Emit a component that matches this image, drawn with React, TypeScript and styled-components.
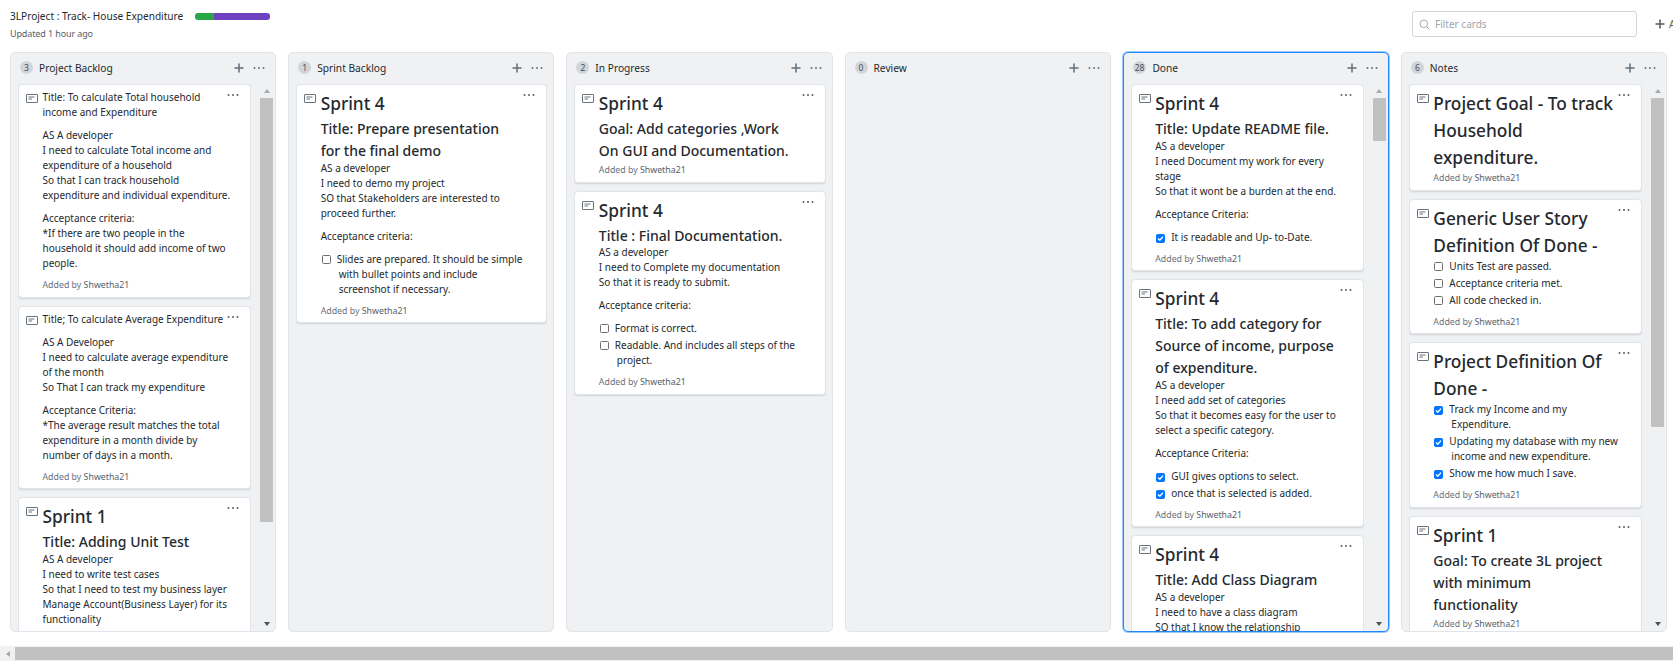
import React from "react";
import styled, { createGlobalStyle } from "styled-components";

const GlobalStyle = createGlobalStyle`
  html, body {
    margin: 0;
    padding: 0;
    background: #fff;
    overflow: hidden;
  }
  body {
    font-family: "Noto Sans", "Liberation Sans", sans-serif;
    color: #24292e;
  }
`;

const Page = styled.div`
  width: 1673px;
  height: 661px;
  display: flex;
  flex-direction: column;
  overflow: hidden;
`;

const Header = styled.header`
  height: 52px;
  flex-shrink: 0;
  display: flex;
  align-items: flex-start;
`;

const TitleBlock = styled.div`
  flex: 0 0 1412px;
  padding: 9px 0 0 10px;
  box-sizing: border-box;
`;

const TitleRow = styled.div`
  display: flex;
  align-items: center;
  height: 14px;
  gap: 12px;
`;

const ProjectName = styled.span`
  font-size: 10.1px;
  line-height: 14px;
  white-space: nowrap;
`;

const Progress = styled.div`
  width: 75px;
  height: 7px;
  border-radius: 3px;
  overflow: hidden;
  display: flex;
`;

const ProgressPart = styled.span<{ $color: string; $width: number }>`
  background: ${(p) => p.$color};
  width: ${(p) => p.$width}px;
`;

const Updated = styled.div`
  margin-top: 5px;
  font-size: 9px;
  letter-spacing: -0.12px;
  line-height: 12px;
  color: #586069;
`;

const FilterBox = styled.div`
  flex: 0 0 225px;
  height: 26px;
  margin-top: 11px;
  box-sizing: border-box;
  border: 1px solid #d1d5da;
  border-radius: 3px;
  display: flex;
  align-items: center;
  gap: 5px;
  padding-left: 6px;
  font-size: 10px;
  color: #9ea4aa;
`;

const AddCards = styled.div`
  flex-shrink: 0;
  margin: 11px 0 0 18px;
  height: 26px;
  display: flex;
  align-items: center;
  gap: 4px;
  font-size: 10.6px;
  color: #586069;
  white-space: nowrap;
`;

const Board = styled.main`
  height: 580px;
  flex-shrink: 0;
  padding: 0 6px 0 10px;
  display: flex;
  gap: 12px;
`;

const Column = styled.section<{ $active?: boolean }>`
  flex: 1 1 0;
  min-width: 0;
  box-sizing: border-box;
  display: flex;
  flex-direction: column;
  background: #f0f1f3;
  border: 1px solid ${(p) => (p.$active ? "#2188ff" : "#e1e4e8")};
  border-radius: 5px;
  box-shadow: ${(p) => (p.$active ? "0 0 0 1px rgba(33,136,255,0.45)" : "none")};
  overflow: hidden;
`;

const ColumnHead = styled.div`
  flex-shrink: 0;
  height: 31px;
  display: flex;
  align-items: center;
  padding: 0 10px 2px 9px;
  box-sizing: border-box;
`;

const Count = styled.span`
  min-width: 13px;
  height: 13px;
  padding: 0 2px;
  box-sizing: border-box;
  border-radius: 7px;
  background: #d1d5da;
  display: inline-flex;
  align-items: center;
  justify-content: center;
  font-size: 8.5px;
  color: #444d56;
`;

const ColumnName = styled.span`
  margin-left: 6px;
  font-size: 10.2px;
  flex: 1;
  white-space: nowrap;
`;

const HeadAction = styled.span`
  display: inline-flex;
  color: #6a737d;
  margin-left: 9px;
`;

const ColumnBody = styled.div`
  flex: 1;
  min-height: 0;
  display: flex;
  padding-left: 7px;
`;

const CardList = styled.div<{ $scroll?: boolean }>`
  flex: 1;
  min-width: 0;
  display: flex;
  flex-direction: column;
  gap: 8px;
  overflow: hidden;
  margin-right: ${(p) => (p.$scroll ? 0 : 6)}px;
`;

const Track = styled.div`
  flex: 0 0 13px;
  margin: 0 2px 0 9px;
  display: flex;
  flex-direction: column;
  align-items: center;
`;

const ArrowSlot = styled.div`
  flex: 0 0 14px;
  display: flex;
  align-items: center;
  justify-content: center;
  &:last-child {
    margin-top: auto;
  }
`;

const ArrowUp = styled.span`
  border-left: 3.5px solid transparent;
  border-right: 3.5px solid transparent;
  border-bottom: 4px solid #a8a8a8;
`;

const ArrowDown = styled.span`
  border-left: 3.5px solid transparent;
  border-right: 3.5px solid transparent;
  border-top: 4px solid #505050;
`;

const Thumb = styled.div<{ $height: number }>`
  width: 13px;
  height: ${(p) => p.$height}px;
  background: #c1c1c1;
`;

const CardBox = styled.article`
  position: relative;
  flex-shrink: 0;
  display: flex;
  box-sizing: border-box;
  background: #fff;
  border: 1px solid #e1e4e8;
  border-radius: 4px;
  box-shadow: 0 1px 2px rgba(27, 31, 35, 0.14);
  padding: 5px 6px 5.5px 7px;
`;

const NoteIcon = styled.svg`
  flex: 0 0 12px;
  width: 12px;
  height: 9px;
  margin: 4px 4.5px 0 0;
  color: #6a737d;
`;

const CardDots = styled.span`
  position: absolute;
  top: 8px;
  right: 11px;
  display: inline-flex;
  color: #586069;
`;

const CardBody = styled.div`
  flex: 1;
  min-width: 0;
  white-space: nowrap;
`;

const H1 = styled.div`
  font-size: 17.3px;
  line-height: 27px;
  font-weight: 500;
  & + div {
    margin-top: 1px;
  }
`;

const H2 = styled.div`
  font-size: 14px;
  line-height: 22px;
  font-weight: 500;
  margin-bottom: -1.5px;
`;

const Para = styled.p`
  margin: 0 0 8px;
  font-size: 10px;
  line-height: 15px;
`;

const TaskList = styled.ul`
  list-style: none;
  margin: 0 0 8px;
  padding: 0 0 0 1px;
`;

const TaskItem = styled.li`
  font-size: 10px;
  line-height: 15px;
  padding-left: 17px;
  text-indent: -17px;
  & + & {
    margin-top: 2px;
  }
`;

const Box = styled.span<{ $checked: boolean }>`
  display: inline-flex;
  vertical-align: -1px;
  box-sizing: border-box;
  width: 9px;
  height: 9px;
  margin-right: 6px;
  text-indent: 0;
  border-radius: 1.5px;
  border: 1px solid ${(p) => (p.$checked ? "#0075ff" : "#6f6f6f")};
  background: ${(p) => (p.$checked ? "#0075ff" : "#fff")};
`;

const AddedBy = styled.div`
  margin-top: 3.5px;
  font-size: 8.8px;
  line-height: 12px;
  color: #6a737d;
`;

const Author = styled.span`
  color: #586069;
`;

const BottomBar = styled.div`
  margin-top: 14px;
  flex: 1;
  display: flex;
  align-items: center;
  background: #f1f1f1;
`;

const BottomArrow = styled.div`
  flex: 0 0 15px;
  display: flex;
  justify-content: center;
`;

const ArrowLeft = styled.span`
  border-top: 3.5px solid transparent;
  border-bottom: 3.5px solid transparent;
  border-right: 4px solid #a8a8a8;
`;

const BottomThumb = styled.div`
  flex: 1;
  height: 13px;
  background: #c1c1c1;
`;

type Block =
  | { h1: string[] }
  | { h2: string[] }
  | { p: string[] }
  | { tasks: { lines: string[]; done?: boolean }[] };

type ColumnData = {
  name: string;
  count: number;
  active?: boolean;
  thumb?: number;
  clipLast?: boolean; // last card runs past the column, its footer is out of view
  cards: Block[][];
};

const story = (...lines: string[]): Block => ({ p: lines });

const columns: ColumnData[] = [
  {
    name: "Project Backlog",
    count: 3,
    thumb: 424,
    clipLast: true,
    cards: [
      [
        story("Title: To calculate Total household", "income and Expenditure"),
        story(
          "AS A developer",
          "I need to calculate Total income and",
          "expenditure of a household",
          "So that I can track household",
          "expenditure and individual expenditure."
        ),
        story(
          "Acceptance criteria:",
          "*If there are two people in the",
          "household it should add income of two",
          "people."
        ),
      ],
      [
        story("Title; To calculate Average Expenditure"),
        story(
          "AS A Developer",
          "I need to calculate average expenditure",
          "of the month",
          "So That I can track my expenditure"
        ),
        story(
          "Acceptance Criteria:",
          "*The average result matches the total",
          "expenditure in a month divide by",
          "number of days in a month."
        ),
      ],
      [
        { h1: ["Sprint 1"] },
        { h2: ["Title: Adding Unit Test"] },
        story(
          "AS A developer",
          "I need to write test cases",
          "So that I need to test my business layer",
          "Manage Account(Business Layer) for its",
          "functionality"
        ),
      ],
    ],
  },
  {
    name: "Sprint Backlog",
    count: 1,
    cards: [
      [
        { h1: ["Sprint 4"] },
        { h2: ["Title: Prepare presentation", "for the final demo"] },
        story(
          "AS a developer",
          "I need to demo my project",
          "SO that Stakeholders are interested to",
          "proceed further."
        ),
        story("Acceptance criteria:"),
        {
          tasks: [
            {
              lines: [
                "Slides are prepared. It should be simple",
                "with bullet points and include",
                "screenshot if necessary.",
              ],
            },
          ],
        },
      ],
    ],
  },
  {
    name: "In Progress",
    count: 2,
    cards: [
      [{ h1: ["Sprint 4"] }, { h2: ["Goal: Add categories ,Work", "On GUI and Documentation."] }],
      [
        { h1: ["Sprint 4"] },
        { h2: ["Title : Final Documentation."] },
        story("AS a developer", "I need to Complete my documentation", "So that it is ready to submit."),
        story("Acceptance criteria:"),
        {
          tasks: [
            { lines: ["Format is correct."] },
            { lines: ["Readable. And includes all steps of the", "project."] },
          ],
        },
      ],
    ],
  },
  { name: "Review", count: 0, cards: [] },
  {
    name: "Done",
    count: 28,
    active: true,
    thumb: 43,
    clipLast: true,
    cards: [
      [
        { h1: ["Sprint 4"] },
        { h2: ["Title: Update README file."] },
        story(
          "AS a developer",
          "I need Document my work for every",
          "stage",
          "So that it wont be a burden at the end."
        ),
        story("Acceptance Criteria:"),
        { tasks: [{ lines: ["It is readable and Up- to-Date."], done: true }] },
      ],
      [
        { h1: ["Sprint 4"] },
        { h2: ["Title: To add category for", "Source of income, purpose", "of expenditure."] },
        story(
          "AS a developer",
          "I need add set of categories",
          "So that it becomes easy for the user to",
          "select a specific category."
        ),
        story("Acceptance Criteria:"),
        {
          tasks: [
            { lines: ["GUI gives options to select."], done: true },
            { lines: ["once that is selected is added."], done: true },
          ],
        },
      ],
      [
        { h1: ["Sprint 4"] },
        { h2: ["Title: Add Class Diagram"] },
        story("AS a developer", "I need to have a class diagram", "SO that I know the relationship"),
      ],
    ],
  },
  {
    name: "Notes",
    count: 6,
    thumb: 329,
    cards: [
      [{ h1: ["Project Goal - To track", "Household", "expenditure."] }],
      [
        { h1: ["Generic User Story", "Definition Of Done -"] },
        {
          tasks: [
            { lines: ["Units Test are passed."] },
            { lines: ["Acceptance criteria met."] },
            { lines: ["All code checked in."] },
          ],
        },
      ],
      [
        { h1: ["Project Definition Of", "Done -"] },
        {
          tasks: [
            { lines: ["Track my Income and my", "Expenditure."], done: true },
            { lines: ["Updating my database with my new", "income and new expenditure."], done: true },
            { lines: ["Show me how much I save."], done: true },
          ],
        },
      ],
      [{ h1: ["Sprint 1"] }, { h2: ["Goal: To create 3L project", "with minimum", "functionality"] }],
    ],
  },
];

const Lines = ({ lines }: { lines: string[] }) => (
  <>
    {lines.map((line, i) => (
      <React.Fragment key={i}>
        {i > 0 && <br />}
        {line}
      </React.Fragment>
    ))}
  </>
);

const Dots = () => (
  <svg width="12" height="4" viewBox="0 0 12 4" fill="currentColor">
    <circle cx="1.5" cy="2" r="1" />
    <circle cx="6" cy="2" r="1" />
    <circle cx="10.5" cy="2" r="1" />
  </svg>
);

const Plus = () => (
  <svg width="10" height="10" viewBox="0 0 10 10" fill="currentColor">
    <rect x="4.2" y="0.5" width="1.6" height="9" />
    <rect x="0.5" y="4.2" width="9" height="1.6" />
  </svg>
);

const renderBlock = (block: Block, key: number) => {
  if ("h1" in block) return <H1 key={key}><Lines lines={block.h1} /></H1>;
  if ("h2" in block) return <H2 key={key}><Lines lines={block.h2} /></H2>;
  if ("p" in block) return <Para key={key}><Lines lines={block.p} /></Para>;
  return (
    <TaskList key={key}>
      {block.tasks.map((task, i) => (
        <TaskItem key={i}>
          <Box $checked={!!task.done}>
            {task.done && (
              <svg width="7" height="7" viewBox="0 0 7 7" fill="none" stroke="#fff" strokeWidth="1.4">
                <path d="M1 3.6 L2.8 5.3 L6 1.6" />
              </svg>
            )}
          </Box>
          <Lines lines={task.lines} />
        </TaskItem>
      ))}
    </TaskList>
  );
};

const Card = ({ blocks, hideFooter }: { blocks: Block[]; hideFooter?: boolean }) => (
  <CardBox>
    <NoteIcon viewBox="0 0 12 9" fill="none" stroke="currentColor">
      <rect x="0.5" y="0.5" width="11" height="8" rx="0.5" />
      <path d="M2.5 3 H8.5 M2.5 5 H6" />
    </NoteIcon>
    <CardBody>
      {blocks.map(renderBlock)}
      {!hideFooter && (
        <AddedBy>
          Added by <Author>Shwetha21</Author>
        </AddedBy>
      )}
    </CardBody>
    <CardDots>
      <Dots />
    </CardDots>
  </CardBox>
);

const App = () => (
  <Page>
    <GlobalStyle />
    <Header>
      <TitleBlock>
        <TitleRow>
          <ProjectName>3LProject : Track- House Expenditure</ProjectName>
          <Progress>
            <ProgressPart $color="#28a745" $width={19} />
            <ProgressPart $color="#6f42c1" $width={56} />
          </Progress>
        </TitleRow>
        <Updated>Updated 1 hour ago</Updated>
      </TitleBlock>
      <FilterBox>
        <svg width="11" height="11" viewBox="0 0 11 11" fill="none" stroke="#a3aab1" strokeWidth="1">
          <circle cx="4.8" cy="4.8" r="3.8" />
          <path d="M7.6 7.6 L10.3 10.3" />
        </svg>
        Filter cards
      </FilterBox>
      <AddCards>
        <Plus />
        Add cards
      </AddCards>
    </Header>
    <Board>
      {columns.map((col) => (
        <Column key={col.name} $active={col.active}>
          <ColumnHead>
            <Count>{col.count}</Count>
            <ColumnName>{col.name}</ColumnName>
            <HeadAction>
              <Plus />
            </HeadAction>
            <HeadAction>
              <Dots />
            </HeadAction>
          </ColumnHead>
          <ColumnBody>
            <CardList $scroll={!!col.thumb}>
              {col.cards.map((blocks, i) => (
                <Card key={i} blocks={blocks} hideFooter={col.clipLast && i === col.cards.length - 1} />
              ))}
            </CardList>
            {col.thumb && (
              <Track>
                <ArrowSlot>
                  <ArrowUp />
                </ArrowSlot>
                <Thumb $height={col.thumb} />
                <ArrowSlot>
                  <ArrowDown />
                </ArrowSlot>
              </Track>
            )}
          </ColumnBody>
        </Column>
      ))}
    </Board>
    <BottomBar>
      <BottomArrow>
        <ArrowLeft />
      </BottomArrow>
      <BottomThumb />
    </BottomBar>
  </Page>
);

export default App;
